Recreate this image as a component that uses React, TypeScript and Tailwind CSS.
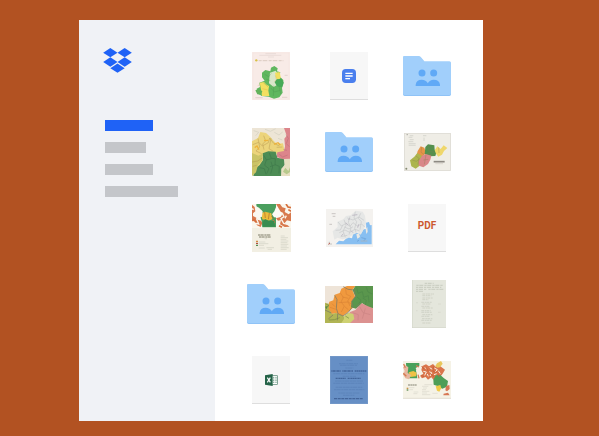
import type { ReactNode } from "react";

type ArtProps = { className: string; box: string; label: string; children: ReactNode };

function Art({ className, box, label, children }: ArtProps) {
  return (
    <svg className={className} viewBox={box} role="img" aria-label={label} preserveAspectRatio="none">
      {children}
    </svg>
  );
}

function Logo() {
  return (
    <svg className="h-[25px] w-[29px]" viewBox="0 0 86 75" fill="#1f62f6" role="img" aria-label="Dropbox">
      <path d="M21.5 0 43 14 21.5 28 0 14Z" />
      <path d="M64.5 0 86 14 64.5 28 43 14Z" />
      <path d="M21.5 28 43 42 21.5 56 0 42Z" />
      <path d="M64.5 28 86 42 64.5 56 43 42Z" />
      <path d="M43 46.500 64.500 60.500 43 74.500 21.500 60.500Z" />
    </svg>
  );
}

function Folder() {
  return (
    <Art className="h-10 w-12" box="0 0 144 120" label="Shared folder">
      <path d="M3 2H47Q51 2 54 6L64 18H139Q144 18 144 23V115Q144 120 139 120H5Q0 120 0 115V5Q0 2 3 2Z" fill="#8fc3f7" />
      <path d="M3 0H47Q51 0 54 4L64 16H139Q144 16 144 21V112Q144 117 139 117H5Q0 117 0 112V3Q0 0 3 0Z" fill="#a1cffb" />
      <g fill="#60a9f6">
        <circle cx="57" cy="51" r="10.500" />
        <circle cx="92" cy="51" r="10.500" />
        <path d="M38 90V86Q40 71 56 71Q69 71 74.500 82Q80 71 92 71Q109 71 111 86V90Z" />
      </g>
    </Art>
  );
}

function Page({ children }: { children: ReactNode }) {
  return (
    <div className="flex h-12 w-[38px] items-center justify-center border-b border-[#dedede] bg-[#f7f7f7]">
      {children}
    </div>
  );
}

function DocFile() {
  return (
    <Page>
      <Art className="h-[14px] w-[14px]" box="0 0 42 42" label="Document">
        <rect width="42" height="42" rx="11" fill="#4a7fee" />
        <path d="M10 13H32M10 21H32M10 29H24" stroke="#fff" strokeWidth="4" />
      </Art>
    </Page>
  );
}

function PdfFile() {
  return (
    <Page>
      <span className="pb-1 font-['Roboto',sans-serif] text-[10px] leading-3 font-bold text-[#cc5930]">PDF</span>
    </Page>
  );
}

function SheetFile() {
  return (
    <Page>
      <Art className="h-3 w-[13px]" box="0 0 39 36" label="Spreadsheet">
        <rect x="19" y="5" width="18" height="26" fill="#fff" stroke="#4b7f69" strokeWidth="2" />
        <path d="M24 10H28M31 10H35M24 15H28M31 15H35M24 20H28M31 20H35M24 25H28M31 25H35" stroke="#76a18e" strokeWidth="3" />
        <path d="M0 4 23 0V36L0 32Z" fill="#246348" />
        <path d="M7 11 16 25M16 11 7 25" stroke="#fff" strokeWidth="3.500" />
      </Art>
    </Page>
  );
}

function CountyMap() {
  return (
    <Art className="h-12 w-[38px]" box="0 0 114 144" label="County map">
      <rect width="114" height="144" fill="#f8ebe7" />
      <rect x="3" y="3" width="108" height="138" fill="none" stroke="#f2dfdb" />
      <path d="M40 5H72M22 10H88M48 15H66" stroke="#dccec9" strokeWidth="1.500" />
      <path d="M20 26H94" stroke="#cdbbae" strokeWidth="2" strokeDasharray="9 3 14 4" />
      <circle cx="13" cy="25" r="3.500" fill="#d7c044" />
      <path d="M30 62 40 54 55 58 57 47 67 42 77 49 75 58 85 61 82 73 94 84 94 96 90 108 92 122 82 136 66 140 50 134 29 132 15 122 14 110 24 105 22 92 38 86 30 76Z" fill="#60b75f" />
      <path d="M54 62 71 56 78 66 75 88 79 97 65 105 51 94 52 80Z" fill="#d9e6c9" />
      <path d="M69 62 83 60 86 76 80 86 72 78Z" fill="#f2df61" />
      <path d="M23 92 36 90 44 98 51 102 49 116 52 132 30 132 27 112Z" fill="#f4df60" />
      <path d="M10 115 22 112 31 118 26 128 16 127Z" fill="#62b25b" />
      <path d="M74 82 89 80 95 92 90 106 75 103 68 91Z" fill="#47a957" />
      <g opacity="0.5">
        <path d="M38 67 50 74 58 64M43 82 55 86M57 108 67 120 85 115M65 101 64 132M81 102 86 126M34 92 48 104" fill="none" stroke="#448a4b" strokeWidth="1.500" />
        <path d="M17 101 25 98M70 70 73 82 67 90M31 110 47 114" fill="none" stroke="#dc9c42" strokeWidth="1.500" />
      </g>
      <path d="M10 137H32M90 136H106M98 70H107" stroke="#d8c6c0" strokeWidth="2" />
    </Art>
  );
}

function RegionMap() {
  return (
    <Art className="h-12 w-[38px]" box="0 0 114 144" label="Region map">
      <rect width="114" height="144" fill="#ede5d6" />
      <path d="M0 40 18 30 25 12 42 15 55 27 66 40 75 48 93 46 98 70 76 78 49 72 31 84 32 104 15 126 0 132Z" fill="#ecd47b" />
      <path d="M96 0H114V93L91 94 74 86 76 73 96 69 99 55 97 32 104 23Z" fill="#dc858b" />
      <path d="M32 76 49 70 71 71 76 89 96 94 98 110 89 122 91 144H4L9 122 23 111 33 96Z" fill="#4d8c55" />
      <path d="M0 75 19 83 31 77 32 97 18 111 12 133 0 144Z" fill="#cbc466" />
      <path d="M98 93 114 92V144H87L88 122 98 113Z" fill="#e6dfc1" />
      <path d="M93 131 100 119 109 129 114 118V132L104 139Z" fill="#b7c98c" />
      <g opacity="0.6">
        <path d="M2 50 20 43 31 54 49 44 53 30 64 45 82 54M18 31 23 57 12 69 29 77M35 23 41 39 32 48 36 65M0 102 17 99 31 90M57 31 51 62 64 70M74 58 91 57M2 115 14 112" fill="none" stroke="#ae8e48" strokeWidth="2" />
        <path d="M35 82 43 95 38 112 51 122 44 137M52 75 58 91 70 92 69 110 82 115 81 136M23 119 37 122 42 139M57 101 62 117 56 137M42 96 58 92M71 110 54 116" fill="none" stroke="#376d45" strokeWidth="2" />
        <path d="M82 79 92 87 107 81M102 20 109 31 103 47 112 56M94 65 105 67" fill="none" stroke="#af656e" strokeWidth="2" />
        <path d="M5 8 20 13 11 23M39 4 55 10 71 2M67 13 81 21 92 12M78 31 91 36" fill="none" stroke="#c1c1b0" strokeWidth="2" />
      </g>
      <path d="M8 59 15 54 21 65M66 49 78 44 85 51M36 38 49 37" fill="none" stroke="#eeb33b" strokeWidth="4" />
    </Art>
  );
}

function VirginiaMap() {
  return (
    <Art className="h-[38px] w-[47px]" box="0 0 141 114" label="State map">
      <rect width="141" height="114" fill="#efede6" />
      <rect x="1.500" y="1.500" width="138" height="111" fill="none" stroke="#dad8d1" strokeWidth="2" />
      <path d="M41 54 50 40 61 44 66 60 54 72 37 68Z" fill="#e69445" />
      <path d="M64 42 72 34 91 37 92 50 98 56 94 69 77 70 62 64Z" fill="#54904e" />
      <path d="M92 52 100 40 110 48 119 37 130 45 120 54 114 65 103 71 96 62Z" fill="#efd76c" />
      <path d="M18 82 31 71 40 60 58 71 55 84 46 99 35 107 22 100Z" fill="#acb54d" />
      <path d="M54 68 66 63 82 68 79 80 72 93 58 103 45 98 43 86Z" fill="#d98788" />
      <path d="M25 81 37 85 47 77M36 69 45 76 42 95M53 42 51 58 60 64M58 81 73 79M66 65 61 94M74 39 75 54 90 58M71 61 85 66M104 43 105 60" fill="none" stroke="#887a4e" strokeWidth="2" opacity="0.5" />
      <path d="M8 5H11" stroke="#8a8a80" strokeWidth="3" />
      <path d="M17 8H28M14 13H25M17 20H29M13 26H28M14 32H35M14 37H35M57 8H67M60 14V24" stroke="#ccccc4" strokeWidth="2" />
      <path d="M89 86H122" stroke="#8d8982" strokeWidth="5" />
      <path d="M94 92H117" stroke="#d0ccc3" strokeWidth="2" />
      <circle cx="7" cy="107" r="3" fill="#858a72" />
    </Art>
  );
}

function LandMap() {
  return (
    <Art className="h-12 w-[39px]" box="0 0 117 144" label="Land use map">
      <rect width="117" height="144" fill="#f2efe3" />
      <rect width="117" height="72" fill="#faf6ed" />
      <path d="M13 0H72V70H31L29 52 25 38 14 26Z" fill="#4b9f5e" />
      <path d="M27 28 39 23 58 28 61 46 48 50 31 46Z" fill="#edbc3c" />
      <path d="M10 5 21 11 32 22 30 38 18 42 7 32Z" fill="#fbf7ef" />
      <path d="M67 22 73 7 85 3 92 20 83 41 66 40 60 31Z" fill="#fdfbf4" />
      <path d="M0 2 8 9 10 22 3 28V36L13 41 12 46 27 50 31 57 26 69 15 64 9 51 0 52ZM72 0H84L91 10 101 13 98 24 110 31 117 25V52L105 49 98 57 113 68 98 69 84 61 87 48 78 50 72 43 86 39 94 27 86 23Z" fill="#d8794d" />
      <path d="M0 14 5 17M14 45 20 60 11 58M91 28 96 38 87 44 95 58 107 61M103 35 99 43" fill="none" stroke="#faf6ed" strokeWidth="4" />
      <path d="M102 0 108 9 117 11M109 17 117 22M81 65 90 70M4 45 12 55M63 49 67 57" fill="none" stroke="#d66f3c" strokeWidth="5" />
      <path d="M32 55 39 45 52 51 66 51 70 68H32Z" fill="#398c50" />
      <path d="M38 24 40 42M52 27 49 46M58 37 66 44" fill="none" stroke="#ae702c" strokeWidth="2" />
      <path d="M18 93H57M21 99H56" stroke="#807e6b" strokeWidth="3" strokeDasharray="6 1 10 2" />
      <path d="M38 104H45M20 114H40M20 119H49M20 124H36M20 132H38M43 131H66M47 136H60M86 96H98M86 101H108M86 106H103M86 111H109M86 116H106M86 121H109M86 126H105M86 131H110M86 136H104" stroke="#c6c6b8" strokeWidth="1.500" />
      <path d="M12 112H18" stroke="#d58a42" strokeWidth="4" />
      <path d="M12 118H18" stroke="#ad503c" strokeWidth="4" />
      <path d="M12 124H18" stroke="#558b50" strokeWidth="4" />
    </Art>
  );
}

function CoastMap() {
  return (
    <Art className="h-[38px] w-[47px]" box="0 0 141 114" label="Coast map">
      <rect width="141" height="114" fill="#f4f2ef" />
      <path d="M29 106 39 95 52 97 65 85 78 88 82 73 97 72 104 76 113 61 121 60 120 41 129 39 132 49 137 48V106Z" fill="#88bff1" />
      <path d="M20 67 35 54 34 38 52 31 60 21 74 19 89 5 110 8 117 20 120 44 113 61 104 77 96 70 79 78 65 88 49 91 35 86 25 92Z" fill="#e6e7e6" />
      <g opacity="0.55">
        <path d="M36 39 46 51 61 43 72 52 81 41 94 51 107 45 116 54M54 32 60 49 51 66 58 85M72 22 67 40 75 57 69 77M88 8 84 27 92 38 86 58 90 70M104 13 97 28 106 38 102 62M40 71 57 63 71 70 87 61 101 66M50 49 43 63 29 64M64 27 81 33 99 24 114 34M44 83 64 79M55 54 69 60 81 53" fill="none" stroke="#afb2b5" strokeWidth="2" />
        <path d="M79 19 94 17M59 41 66 49M75 65 81 71M95 56 98 46M52 75 46 80M67 32 72 29" stroke="#a198aa" strokeWidth="3" />
      </g>
      <path d="M91 76 94 89 102 84 99 72M119 61 121 75 125 69 124 54" fill="#ece9e3" />
      <path d="M17 14H29M20 22H28M10 46H18M104 96H124M8 105H18M8 100H12" stroke="#b3afac" strokeWidth="2" />
      <path d="M7 106 12 102" stroke="#bd6155" strokeWidth="3" />
      <path d="M106 86 119 89 114 95M93 97 99 94" fill="none" stroke="#679cd3" strokeWidth="2" />
    </Art>
  );
}

function DistrictMap() {
  return (
    <Art className="h-[37px] w-12" box="0 0 144 111" label="District map">
      <rect width="144" height="111" fill="#eee4d8" />
      <path d="M13 47 25 43 29 26 44 21 49 8 66 0H91L82 12 90 31 82 47 84 65 70 77 53 91 32 82 20 84 8 66Z" fill="#f0993e" />
      <path d="M91 0H144V66L130 65 112 52 93 68 78 64 80 46 91 31 83 13Z" fill="#5a964d" />
      <path d="M110 52 129 61 144 67V111H64L58 96 75 78 91 72Z" fill="#dc9290" />
      <path d="M0 50 13 54 11 67 21 84 33 81 55 90 61 98 54 111H0Z" fill="#b1b554" />
      <path d="M57 91 70 80 85 84 88 99 75 111H49L57 99Z" fill="#ced172" />
      <path d="M29 28 36 41 34 67 39 83 54 90 69 80 83 62 80 46 92 30 87 12 69 10 55 2M38 83 37 103M19 81 0 72M10 99 24 87M93 66 104 52" fill="none" stroke="#7d7964" strokeWidth="3" opacity="0.75" />
      <g opacity="0.45">
        <path d="M46 21 55 34 48 48 58 60 49 78M62 9 64 25 77 31 68 45 75 60M41 50 70 48 78 54M21 53 30 62M52 33 70 37M59 62 70 71M15 64 32 70" fill="none" stroke="#c16b2b" strokeWidth="2" />
        <path d="M95 4 99 22 112 17 116 34 130 29 132 49M96 33 108 43 102 53M124 4 129 18 142 24M113 36 124 43 121 57" fill="none" stroke="#3f7944" strokeWidth="2" />
        <path d="M83 80 100 86 99 103M104 62 114 80 136 86M121 67 112 98" fill="none" stroke="#b77372" strokeWidth="2" />
      </g>
      <path d="M4 55 12 59 2 66M12 102 29 101 44 95M61 90 72 97" fill="none" stroke="#748942" strokeWidth="2" />
      <path d="M0 62 8 60 5 70Z" fill="#58894c" />
    </Art>
  );
}

function Letter() {
  return (
    <Art className="ml-1 h-12 w-[34px]" box="0 0 102 144" label="Letter">
      <rect width="102" height="144" fill="#e4e6dc" />
      <path d="M1 0V144M0 143H102" stroke="#d2d5c8" strokeWidth="2" />
      <path d="M38 10H65M13 16H92M12 22H88M12 28H44M49 28H94M12 34H35" stroke="#c3c7bb" strokeWidth="2.500" strokeDasharray="7 2 12 3" />
      <path d="M31 42H66M31 47H58M31 54H62M31 59H49M28 67H60M31 72H57M28 79H54M31 84H63M28 92H56M28 97H60M31 104H61M28 109H52M30 116H61M28 121H59M31 129H57" stroke="#c5c9bd" strokeWidth="2" strokeDasharray="8 2 5 1" />
      <path d="M12 68H18M12 92H17M78 72H87M78 97H86" stroke="#d4d7cb" strokeWidth="2" />
    </Art>
  );
}

function Notice() {
  return (
    <Art className="h-12 w-[38px]" box="0 0 114 144" label="Printed notice">
      <rect width="114" height="144" fill="#668fc5" />
      <rect x="1" y="1" width="112" height="142" fill="none" stroke="#789bc9" strokeWidth="2" />
      <path d="M49 13H67M27 23H84M30 28H81M46 36H70M10 53H103M38 61H78M15 75H99M10 82H101M17 94H97M12 101H103M25 111H88M39 118H73" stroke="#5880b6" strokeWidth="2" strokeDasharray="7 1 12 2" />
      <path d="M4 45H32M37 45H69M74 45H109" stroke="#43659a" strokeWidth="5" strokeDasharray="4 1 6 1" />
      <path d="M17 67H48M53 67H93" stroke="#43659a" strokeWidth="4" strokeDasharray="5 1 3 1" />
      <path d="M12 128H98" stroke="#43659a" strokeWidth="4" strokeDasharray="9 2" />
    </Art>
  );
}

function OwnershipMap() {
  return (
    <Art className="h-[38px] w-12" box="0 0 144 114" label="Ownership map">
      <rect width="144" height="114" fill="#f5f2e6" />
      <path d="M9 6H49V21L39 28 43 52H18L20 42 10 34Z" fill="#4aa15a" />
      <path d="M17 34 31 30 41 35 39 46 22 48Z" fill="#eec246" />
      <path d="M8 13 16 19 14 36 24 42 18 55 7 52 0 40 5 30 0 19Z" fill="#e8b7a0" />
      <path d="M38 21 51 14 52 34 45 43Z" fill="#f6eee1" />
      <path d="M2 9 7 20M1 37 10 46M45 41 48 52M39 14 48 18" stroke="#d57b53" strokeWidth="4" />
      <path d="M58 15 69 10 78 16 90 9 98 17 108 13 119 21 126 26 119 38 113 46 99 44 92 57 85 49 75 56 68 48 57 52 51 44 61 38 55 27Z" fill="#da754c" />
      <path d="M65 20 72 24M80 20 88 25M61 31 70 33 65 43M79 32 87 36 81 45M94 21 103 26 96 33M106 29 112 38M93 41 101 38M73 39 76 46" fill="none" stroke="#f8efdf" strokeWidth="3" />
      <path d="M97 15 102 7 114 0 119 8 111 19 103 20Z" fill="#e9c65a" />
      <path d="M91 56 98 43 112 42 123 52 135 60 132 77 118 83 106 76 92 71Z" fill="#4e9e57" />
      <path d="M98 76 112 72 115 82 109 92 102 89Z" fill="#f0ca46" />
      <path d="M129 75 139 72 140 84 132 91 127 88M122 98 135 95 140 103H121Z" fill="#d77754" />
      <path d="M56 16 64 25M69 19 76 31M91 16 90 31 101 35M84 39 94 48M55 43 63 47M105 40 109 47" fill="none" stroke="#c9633a" strokeWidth="3" />
      <path d="M15 72H41" stroke="#a9a899" strokeWidth="4" strokeDasharray="6 1" />
      <path d="M18 80H34M19 86H30M32 93H46M31 98H43M57 76H76M60 81H72M57 86H69M57 91H79M57 96H72M57 101H82M64 71H88M88 97H104" stroke="#d2d1c4" strokeWidth="1.500" />
      <path d="M11 82H16" stroke="#cc954b" strokeWidth="4" />
      <path d="M11 87H16" stroke="#598951" strokeWidth="4" />
      <path d="M0 112H144" stroke="#dbd8cb" strokeWidth="2" />
    </Art>
  );
}

const files = [
  CountyMap, DocFile, Folder,
  RegionMap, Folder, VirginiaMap,
  LandMap, CoastMap, PdfFile,
  Folder, DistrictMap, Letter,
  SheetFile, Notice, OwnershipMap,
];

const navBars = ["w-12 bg-[#1f62f6]", "w-[41px] bg-[#c4c6ca]", "w-12 bg-[#c4c6ca]", "w-[73px] bg-[#c4c6ca]"];

export default function App() {
  return (
    <div className="min-h-screen bg-[#b25222] pt-5 pr-[116px] pb-[15px] pl-[79px]">
      <div className="flex bg-white">
        <aside className="w-[136px] shrink-0 bg-[#f0f2f6] px-6 pt-7">
          <Logo />
          <nav className="mt-[47px] ml-[2px] flex flex-col gap-[11px]" aria-label="Sections">
            {navBars.map((bar, i) => (
              <div key={i} className={`h-[11px] ${bar}`} />
            ))}
          </nav>
        </aside>
        <main className="flex-1 px-[17px] pt-[18px] pb-[3px]">
          <ul className="grid grid-cols-3">
            {files.map((File, i) => (
              <li key={i} className="flex h-19 items-center justify-center">
                <File />
              </li>
            ))}
          </ul>
        </main>
      </div>
    </div>
  );
}
